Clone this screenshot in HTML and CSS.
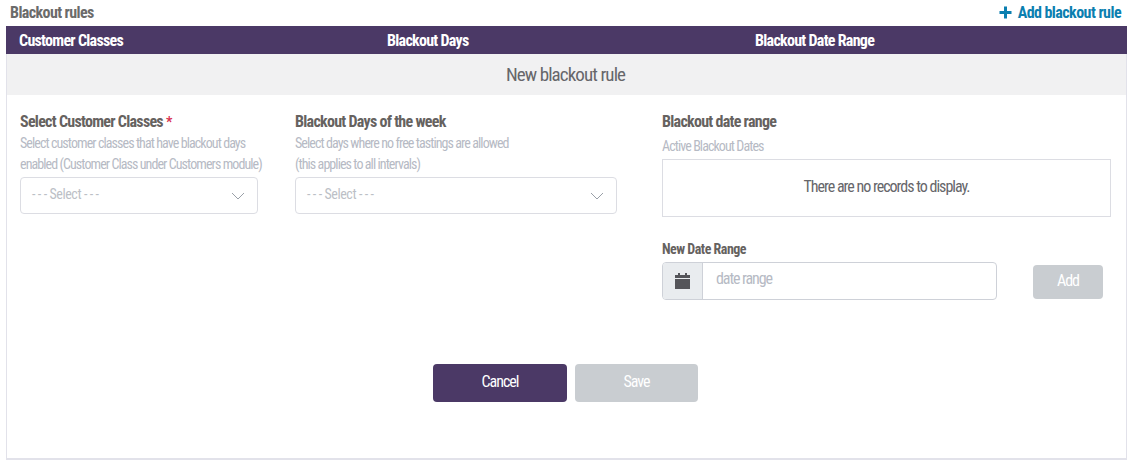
FILE: index.html
```html
<!DOCTYPE html>
<html lang="en">
<head>
  <meta charset="UTF-8" />
  <meta name="viewport" content="width=device-width, initial-scale=1.0"/>
  <title>Blackout rules</title>
  <link rel="stylesheet" href="styles.css">
</head>
<body>

  <!-- Title row -->
  <div class="top-row">
    <span class="page-title">Blackout rules</span>
    <a class="add-rule" href="#">
      <svg width="13" height="13" viewBox="0 0 13 13"><path d="M6.5 0.5v12M0.5 6.5h12" stroke="#0b7fb0" stroke-width="3" fill="none"/></svg>
      Add blackout rule
    </a>
  </div>

  <div class="card">
    <!-- Table head -->
    <div class="table-head">
      <div class="th">Customer Classes</div>
      <div class="th">Blackout Days</div>
      <div class="th">Blackout Date Range</div>
    </div>

    <div class="form-title">New blackout rule</div>

    <div class="form-body">
      <div class="col col-classes">
        <h4>Select Customer Classes <span class="req">*</span></h4>
        <p class="hint">Select customer classes that have blackout days<br>enabled (Customer Class under Customers module)</p>
        <div class="select">
          <span>- - - Select - - -</span>
          <svg width="14" height="8" viewBox="0 0 14 8"><path d="M1 1l6 6 6-6" stroke="#9aa0a8" stroke-width="1" fill="none"/></svg>
        </div>
      </div>

      <div class="col col-days">
        <h4>Blackout Days of the week</h4>
        <p class="hint">Select days where no free tastings are allowed<br>(this applies to all intervals)</p>
        <div class="select">
          <span>- - - Select - - -</span>
          <svg width="14" height="8" viewBox="0 0 14 8"><path d="M1 1l6 6 6-6" stroke="#9aa0a8" stroke-width="1" fill="none"/></svg>
        </div>
      </div>

      <div class="col col-range">
        <h4>Blackout date range</h4>
        <p class="hint active-label">Active Blackout Dates</p>
        <div class="records">There are no records to display.</div>
        <h5>New Date Range</h5>
        <div class="range-row">
          <div class="input-group">
            <span class="input-icon">
              <svg width="15" height="16" viewBox="0 0 15 16"><path d="M3 0h2v2h5V0h2v2h3v3H0V2h3zM0 6h15v10H0z" fill="#55555a"/></svg>
            </span>
            <span class="input-text">date range</span>
          </div>
          <button class="btn btn-add" disabled>Add</button>
        </div>
      </div>
    </div>

    <div class="actions">
      <button class="btn btn-cancel">Cancel</button>
      <button class="btn btn-save" disabled>Save</button>
    </div>
  </div>

</body>
</html>
```

FILE: styles.css
```css
body {
  margin: 0;
  font-family: "Roboto", "Liberation Sans", sans-serif;
  font-stretch: 75%;
  background: #fff;
  color: #5f5f63;
}

.top-row {
  display: flex;
  justify-content: space-between;
  align-items: center;
  height: 26px;
  padding: 0 8px 2px 10px;
  box-sizing: border-box;
}

.page-title {
  font-size: 16px;
  font-weight: 700;
  letter-spacing: -0.6px;
  color: #6b6b6b;
}

.add-rule {
  display: flex;
  align-items: center;
  gap: 6px;
  font-size: 16px;
  font-weight: 700;
  letter-spacing: -0.56px;
  color: #0b7fb0;
  text-decoration: none;
}

.card {
  margin: 0 2px 0 6px;
  height: 434px;
  border: 1px solid #e2e2ea;
  border-top: none;
  border-bottom-width: 2px;
  box-sizing: border-box;
  display: flex;
  flex-direction: column;
}

.table-head {
  margin: 0 -1px;
  height: 28px;
  background: #4b3966;
  display: grid;
  grid-template-columns: 368px 368px 1fr;
  align-items: center;
  padding-left: 13px;
}

.th {
  color: #fff;
  font-size: 16px;
  font-weight: 700;
  letter-spacing: -0.72px;
}

.form-title {
  height: 41px;
  background: #f1f1f2;
  display: flex;
  align-items: center;
  justify-content: center;
  font-size: 19px;
  letter-spacing: -0.9px;
  color: #66666a;
  padding-right: 2px;
}

.form-body {
  display: flex;
  padding-top: 17px;
  padding-left: 13px;
  height: 269px;
  box-sizing: border-box;
}

.col h4 {
  margin: 0;
  font-size: 16px;
  line-height: 20px;
  font-weight: 700;
  letter-spacing: -0.72px;
  color: #66625f;
}

.col-classes {
  width: 238px;
  margin-right: 37px;
}

.col-days {
  width: 322px;
  margin-right: 45px;
}

.col-range {
  width: 449px;
}

.req {
  color: #d9304f;
  font-size: 14px;
}

.hint {
  margin: 1px 0 0;
  font-size: 14px;
  line-height: 21px;
  letter-spacing: -0.92px;
  color: #b6bac4;
  white-space: nowrap;
}

.active-label {
  margin-top: 5px;
  line-height: 18px;
}

.select {
  margin-top: 2px;
  height: 37px;
  box-sizing: border-box;
  border: 1px solid #dcdde3;
  border-radius: 4px;
  display: flex;
  align-items: center;
  justify-content: space-between;
  padding: 0 12px 0 11px;
  font-size: 14px;
  letter-spacing: -0.43px;
  color: #bcbfc6;
}

.select span {
  padding-bottom: 3px;
}

.records {
  margin-top: 4px;
  height: 58px;
  box-sizing: border-box;
  border: 1px solid #dcdde3;
  padding-bottom: 4px;
  display: flex;
  align-items: center;
  justify-content: center;
  font-size: 16px;
  letter-spacing: -1px;
  color: #66666a;
}

.col-range h5 {
  margin: 23px 0 0;
  font-size: 14px;
  line-height: 18px;
  font-weight: 700;
  letter-spacing: -0.5px;
  color: #66625f;
}

.range-row {
  display: flex;
  align-items: center;
  margin-top: 4px;
}

.input-group {
  width: 335px;
  height: 38px;
  box-sizing: border-box;
  border: 1px solid #ced1d8;
  border-radius: 4px;
  display: flex;
  align-items: stretch;
  overflow: hidden;
}

.input-icon {
  width: 39px;
  background: #e9ecef;
  border-right: 1px solid #ced1d8;
  display: flex;
  align-items: center;
  justify-content: center;
}

.input-text {
  padding: 0 0 6px 13px;
  align-self: center;
  font-size: 16px;
  letter-spacing: -1.1px;
  color: #b6bac4;
}

.btn {
  border: none;
  border-radius: 4px;
  color: #fff;
  font-family: inherit;
  font-stretch: inherit;
  font-size: 16px;
  letter-spacing: -1px;
  font-weight: 400;
  padding: 0 0 3px;
}

.btn-add {
  width: 70px;
  height: 34px;
  margin-left: 36px;
  margin-top: 1px;
  background: #c9cdd1;
}

.actions {
  display: flex;
  justify-content: center;
  gap: 8px;
  padding-right: 2px;
}

.btn-cancel {
  width: 134px;
  height: 38px;
  background: #4b3966;
}

.btn-save {
  width: 123px;
  height: 38px;
  background: #c9cdd1;
}
```
